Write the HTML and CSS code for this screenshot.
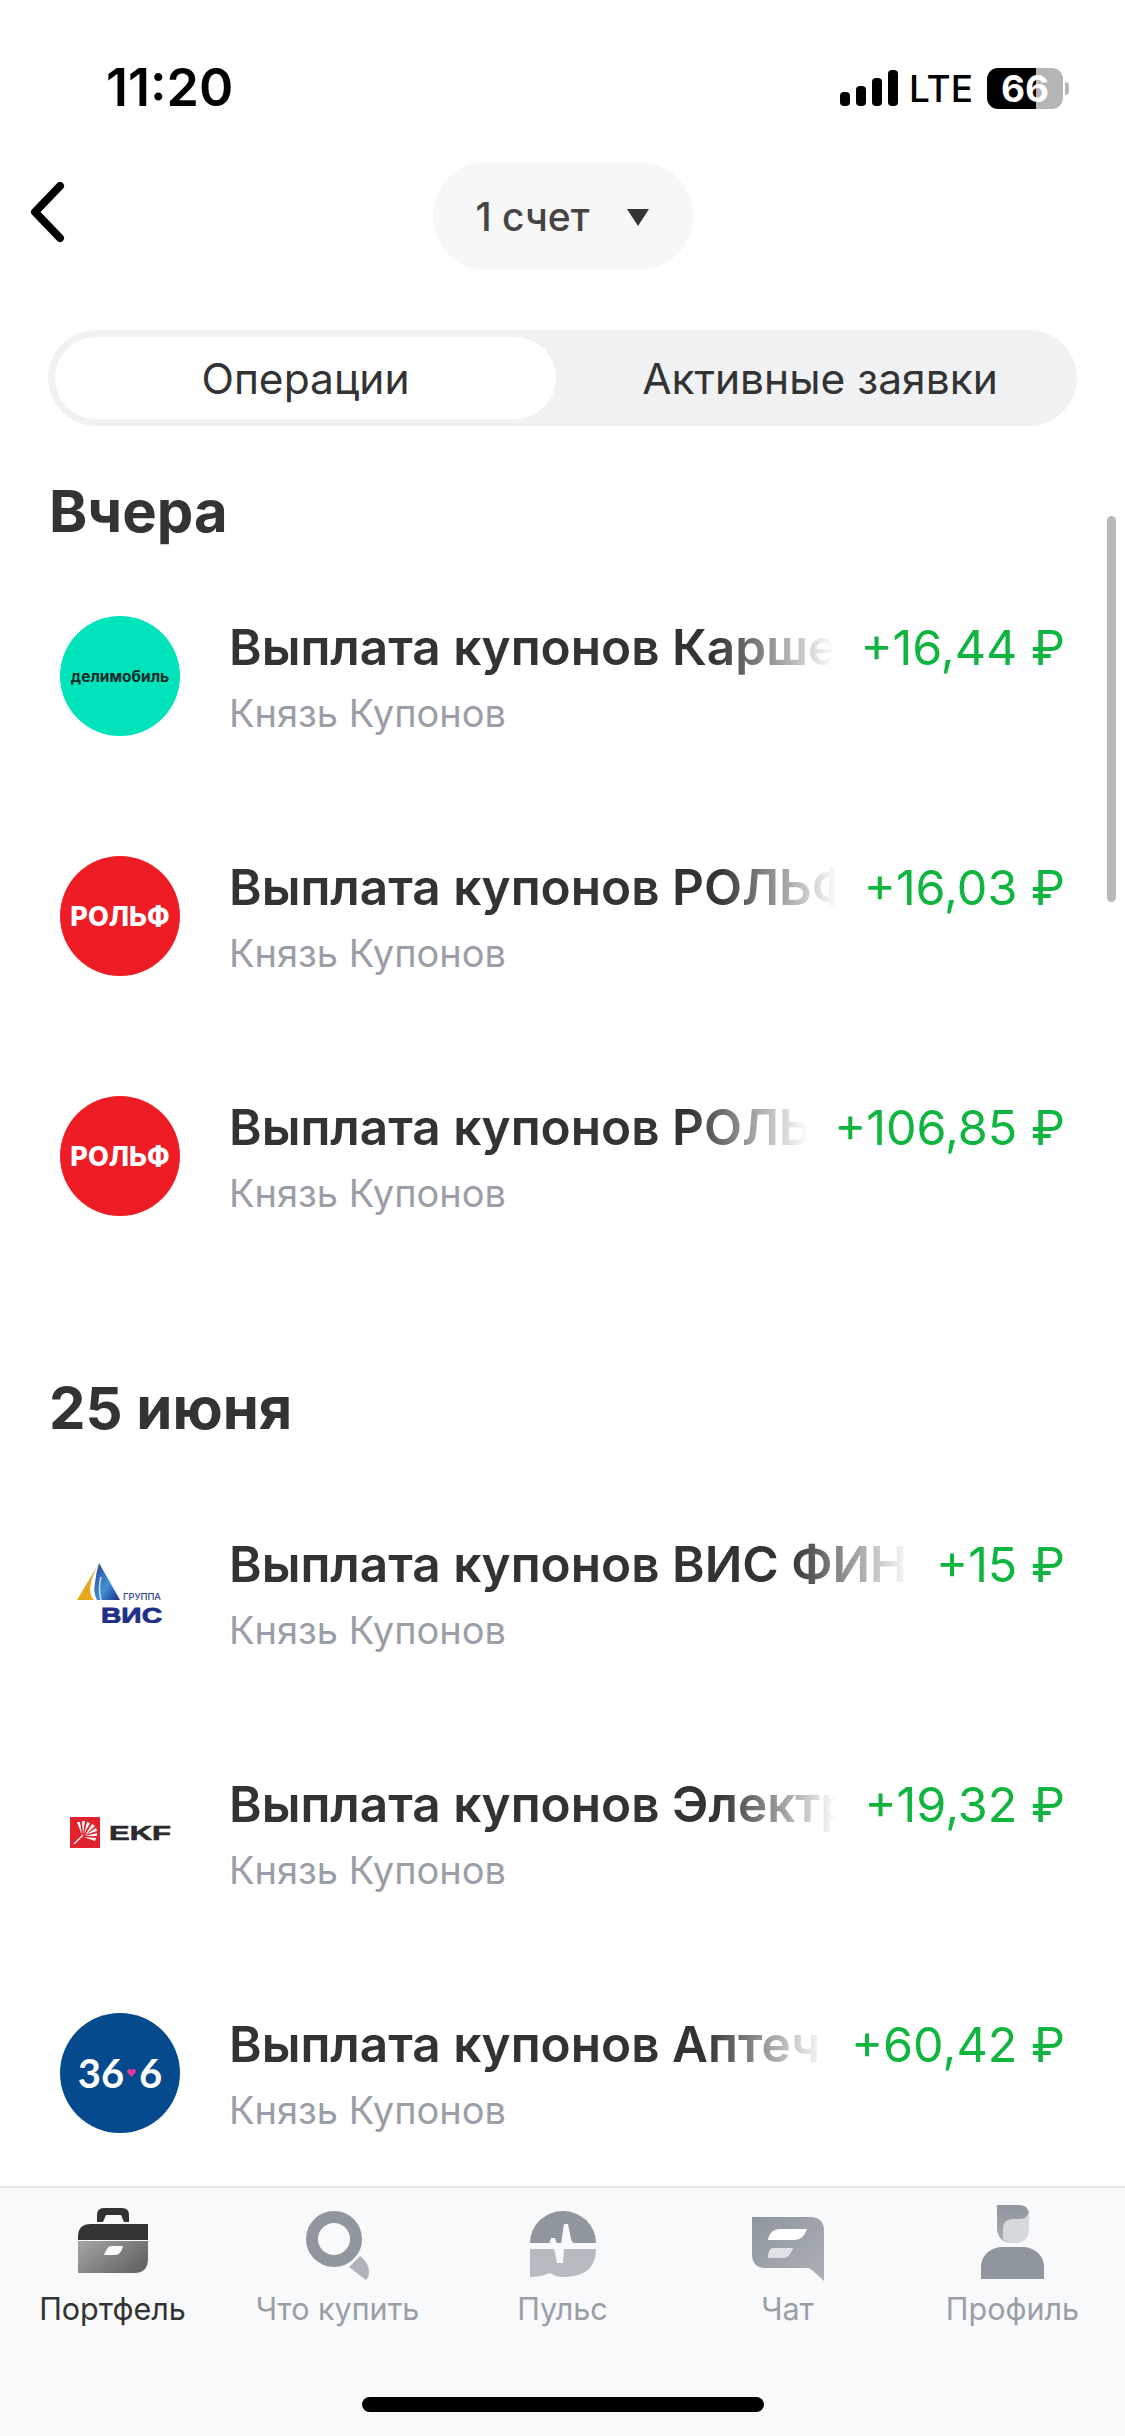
FILE: index.html
```html
<!DOCTYPE html>
<html lang="ru">
<head>
  <meta charset="UTF-8" />
  <meta name="viewport" content="width=device-width, initial-scale=1.0"/>
  <title>Операции</title>
  <link rel="stylesheet" href="styles.css">
</head>
<body>
  <div class="phone">

    <div class="status">
      <span class="clock">11:20</span>
      <div class="status-right">
        <div class="signal"><i></i><i></i><i></i><i></i></div>
        <span class="net">LTE</span>
        <div class="battery"><span class="battery-num">66</span></div>
        <div class="battery-tip"></div>
      </div>
    </div>

    <div class="topbar">
      <svg class="back" width="40" height="64" viewBox="0 0 40 64">
        <path d="M32 4 L7 30 L32 56" fill="none" stroke="#000" stroke-width="8" stroke-linecap="round" stroke-linejoin="round"/>
      </svg>
      <div class="account">
        <span>1 счет</span>
        <span class="caret"></span>
      </div>
    </div>

    <div class="tabs">
      <div class="tab active">Операции</div>
      <div class="tab tab-right">Активные заявки</div>
    </div>

    <div class="feed">
      <div class="scrollbar"></div>

      <h2 class="day">Вчера</h2>

      <div class="op">
        <div class="logo logo-deli">делимобиль</div>
        <div class="op-body">
          <div class="op-title">Выплата купонов Карше</div>
          <div class="op-sub">Князь Купонов</div>
        </div>
        <div class="op-sum">+16,44 ₽</div>
      </div>

      <div class="op">
        <div class="logo logo-rolf">РОЛЬФ</div>
        <div class="op-body">
          <div class="op-title">Выплата купонов РОЛЬФ</div>
          <div class="op-sub">Князь Купонов</div>
        </div>
        <div class="op-sum">+16,03 ₽</div>
      </div>

      <div class="op">
        <div class="logo logo-rolf">РОЛЬФ</div>
        <div class="op-body">
          <div class="op-title">Выплата купонов РОЛЬ</div>
          <div class="op-sub">Князь Купонов</div>
        </div>
        <div class="op-sum">+106,85 ₽</div>
      </div>

      <h2 class="day day-next">25 июня</h2>

      <div class="op">
        <div class="logo logo-vis">
          <svg width="86" height="60" viewBox="0 0 86 60">
            <defs>
              <linearGradient id="visBlue" x1="0" y1="0" x2="1" y2="1">
                <stop offset="0" stop-color="#2c3f96"/>
                <stop offset="0.55" stop-color="#3f8fd6"/>
                <stop offset="1" stop-color="#1d2f86"/>
              </linearGradient>
            </defs>
            <path d="M0 37 L22 0 Q14 14 13 26 Q13 33 17 37 Z" fill="#e8a71c"/>
            <path d="M22 0 L43 37 H20 Q16 30 18 20 Q19 10 22 0 Z" fill="url(#visBlue)"/>
            <path d="M24 14 Q21 25 24 37" stroke="#cfe3f5" stroke-width="1.5" fill="none"/>
            <text class="vis-small" x="46" y="37" textLength="38" lengthAdjust="spacingAndGlyphs">ГРУППА</text>
            <text class="vis-big" x="24" y="60" textLength="61" lengthAdjust="spacingAndGlyphs">ВИС</text>
          </svg>
        </div>
        <div class="op-body">
          <div class="op-title">Выплата купонов ВИС ФИН</div>
          <div class="op-sub">Князь Купонов</div>
        </div>
        <div class="op-sum">+15 ₽</div>
      </div>

      <div class="op">
        <div class="logo logo-ekf">
          <svg width="102" height="32" viewBox="0 0 102 32">
            <rect x="0" y="0" width="30" height="31" fill="#e0232d"/>
            <path d="M4 27 L13 18" stroke="#fff" stroke-width="1.2"/>
            <path d="M12 18 L7 5 L10 5 Z M13 17 L12 4 L15 4 Z M14 17 L17 5 L20 6 Z M15 18 L22 7 L25 9 Z M15 18 L26 11 L27 14 Z M15 19 L27 16 L27 19 Z M14 20 L26 21 L25 24 Z" fill="#fff"/>
            <text class="ekf-word" x="39" y="23" textLength="62" lengthAdjust="spacingAndGlyphs">EKF</text>
          </svg>
        </div>
        <div class="op-body">
          <div class="op-title">Выплата купонов Электр</div>
          <div class="op-sub">Князь Купонов</div>
        </div>
        <div class="op-sum">+19,32 ₽</div>
      </div>

      <div class="op">
        <div class="logo logo-apteka">
          <span>36</span><svg width="9" height="8" viewBox="0 0 10 9"><path d="M5 9 L0.4 3.8 A2.5 2.5 0 0 1 5 1.6 A2.5 2.5 0 0 1 9.6 3.8 Z" fill="#e6399b"/></svg><span>6</span>
        </div>
        <div class="op-body">
          <div class="op-title">Выплата купонов Аптеч</div>
          <div class="op-sub">Князь Купонов</div>
        </div>
        <div class="op-sum">+60,42 ₽</div>
      </div>
    </div>

    <div class="tabbar">
      <div class="nav-row">
        <div class="nav-item active">
          <div class="nav-icon">
            <svg class="lift-7" width="70" height="65" viewBox="0 0 70 65">
              <defs>
                <linearGradient id="caseBody" x1="0" y1="0" x2="1" y2="0.6">
                  <stop offset="0" stop-color="#a6a6a6"/>
                  <stop offset="1" stop-color="#666"/>
                </linearGradient>
              </defs>
              <path d="M19 14 V7 Q19 0 26 0 H44 Q51 0 51 7 V14 H46 L43 7 H28 L25 14 Z" fill="#333"/>
              <path d="M0 32 V29 Q0 16 13 16 H70 V32 Z" fill="#333"/>
              <path d="M0 33 H70 V51 Q70 65 56 65 H0 Z" fill="url(#caseBody)"/>
              <path d="M29 41 Q30 38 34 38 H45 Q43 47 37 47 H26 Q27 44 29 41 Z" fill="#f8f9fa"/>
            </svg>
          </div>
          <span>Портфель</span>
        </div>
        <div class="nav-item">
          <div class="nav-icon">
            <svg width="64" height="69" viewBox="0 0 64 69">
              <path d="M43 56 L54 45 Q63 52 63 61 Q63 66 60 69 Z" fill="#aeb3ba"/>
              <circle cx="28" cy="28" r="22" fill="none" stroke="#8f969e" stroke-width="12"/>
            </svg>
          </div>
          <span>Что купить</span>
        </div>
        <div class="nav-item">
          <div class="nav-icon">
            <svg class="lift-3" width="66" height="66" viewBox="0 0 66 66">
              <path d="M0 32 A33 32 0 0 1 66 32 Z" fill="#8f969e"/>
              <path d="M0 38 H66 Q66 66 33 66 Q26 66 20 62 Q10 66 0 66 Z" fill="#b6bac1"/>
              <path d="M31 33 L34 13 H38 L41 28 Q42 32 46 33 Z M19 33 L21 27 H25 L27 33 Z M24 37 H34 L33 52 H27 Z" fill="#f8f9fa"/>
            </svg>
          </div>
          <span>Пульс</span>
        </div>
        <div class="nav-item">
          <div class="nav-icon">
            <svg class="drop-1" width="72" height="64" viewBox="0 0 72 64">
              <defs>
                <linearGradient id="chatBubble" x1="0" y1="0" x2="1" y2="1">
                  <stop offset="0" stop-color="#8f969e"/>
                  <stop offset="1" stop-color="#abb0b6"/>
                </linearGradient>
              </defs>
              <path d="M0 0 H58 Q72 0 72 14 V64 L60 53 Q58 51 55 51 H14 Q0 51 0 37 Z" fill="url(#chatBubble)"/>
              <path d="M21 14 Q24 12 28 12 H55 Q51 23 43 23 H16 Q17 17 21 14 Z" fill="#fff"/>
              <path d="M20 31 H41 Q38 41 31 41 H16 Q16 33 20 31 Z" fill="#dfe2e6"/>
            </svg>
          </div>
          <span>Чат</span>
        </div>
        <div class="nav-item">
          <div class="nav-icon">
            <svg class="lift-1" width="63" height="74" viewBox="0 0 63 74">
              <defs>
                <linearGradient id="headTop" x1="0" y1="0" x2="0" y2="1">
                  <stop offset="0" stop-color="#8f969e"/>
                  <stop offset="1" stop-color="#a9aeb4"/>
                </linearGradient>
              </defs>
              <path d="M16 0 H38 Q48 0 48 10 V22 Q48 38 32 38 Q16 38 16 22 Z" fill="url(#headTop)"/>
              <path d="M22 34 V24 Q22 14 32 14 H40 Q46 14 48 6 V22 Q48 38 32 38 Q26 38 22 34 Z" fill="#d6d9dc"/>
              <path d="M0 74 V62 C0 50 10 42 22 42 H41 C53 42 63 50 63 62 V74 Z" fill="#8f969e"/>
            </svg>
          </div>
          <span>Профиль</span>
        </div>
      </div>
      <div class="home-bar"></div>
    </div>

  </div>
</body>
</html>
```

FILE: styles.css
```css
:root {
  --text: #333333;
  --muted: #9a9ea6;
  --green: #0fb53f;
  --tab-bg: #f0f1f3;
  --bar-bg: #f8f9fa;
}

* {
  box-sizing: border-box;
}

body {
  margin: 0;
  background: #fff;
  font-family: 'Inter', 'Roboto', sans-serif;
  color: var(--text);
}

.phone {
  width: 1125px;
  height: 2436px;
  display: flex;
  flex-direction: column;
  overflow: hidden;
}

/* status bar */
.status {
  height: 162px;
  flex: none;
  display: flex;
  justify-content: space-between;
  align-items: flex-start;
  padding: 58px 56px 0 106px;
}

.clock {
  font-size: 52px;
  font-weight: 600;
  line-height: 60px;
  color: #000;
}

.status-right {
  display: flex;
  align-items: center;
  height: 60px;
}

.signal {
  display: flex;
  align-items: flex-end;
  gap: 6px;
  height: 36px;
  margin-right: 11px;
}

.signal i {
  width: 10px;
  border-radius: 4px;
  background: #000;
}

.signal i:nth-child(1) { height: 14px; }
.signal i:nth-child(2) { height: 20px; }
.signal i:nth-child(3) { height: 28px; }
.signal i:nth-child(4) { height: 36px; }

.net {
  font-size: 37px;
  font-weight: 500;
  color: #000;
  margin-right: 14px;
}

.battery {
  width: 76px;
  height: 41px;
  border-radius: 11px;
  background: linear-gradient(to right, #000 64%, #b5b5b5 64%);
  display: flex;
  align-items: center;
  justify-content: center;
}

.battery-num {
  font-size: 37px;
  font-weight: 700;
  color: #fff;
}

.battery-tip {
  width: 4px;
  height: 13px;
  margin-left: 2px;
  border-radius: 0 4px 4px 0;
  background: #b5b5b5;
}

/* account switcher */
.topbar {
  height: 108px;
  flex: none;
  position: relative;
  display: flex;
  justify-content: center;
}

.back {
  position: absolute;
  left: 28px;
  top: 20px;
}

.account {
  width: 260px;
  height: 108px;
  border-radius: 54px;
  background: #f7f7f7;
  display: flex;
  align-items: center;
  justify-content: center;
  gap: 38px;
  font-size: 39px;
  font-weight: 500;
  color: #444;
}

.caret {
  width: 0;
  height: 0;
  margin-top: 3px;
  border-left: 11px solid transparent;
  border-right: 11px solid transparent;
  border-top: 17px solid #333;
}

/* segmented tabs */
.tabs {
  flex: none;
  height: 96px;
  margin: 60px 48px 0;
  padding: 7px;
  border-radius: 48px;
  background: var(--tab-bg);
  display: grid;
  grid-template-columns: 501px 1fr;
}

.tab {
  display: flex;
  align-items: center;
  justify-content: center;
  border-radius: 41px;
  font-size: 42.5px;
  color: var(--text);
}

.tab.active {
  background: #fff;
}

.tab-right {
  padding-left: 14px;
}

/* operations list */
.feed {
  flex: 1;
  min-height: 0;
  position: relative;
  overflow: hidden;
  padding: 0 60px;
}

.scrollbar {
  position: absolute;
  top: 90px;
  right: 9px;
  width: 9px;
  height: 386px;
  border-radius: 5px;
  background: #b9b9b9;
}

.day {
  margin: 51px 0 0 -11px;
  font-size: 58px;
  line-height: 68px;
  font-weight: 700;
  color: var(--text);
}

.day-next {
  margin-top: 158px;
}

.op {
  height: 120px;
  display: flex;
  align-items: flex-start;
  margin-top: 120px;
}

.day + .op {
  margin-top: 71px;
}

.day-next + .op {
  margin-top: 91px;
}

.logo {
  width: 120px;
  height: 120px;
  flex: none;
  border-radius: 50%;
  display: flex;
  align-items: center;
  justify-content: center;
  margin-right: 49px;
}

.logo-deli {
  background: #00e3bb;
  color: #0c2b2a;
  font-size: 15.5px;
  font-weight: 700;
}

.logo-rolf {
  background: #ee1c25;
  color: #fff;
  font-size: 27px;
  font-weight: 800;
}

.logo-ekf svg {
  margin-left: 2px;
}

.vis-small {
  font-size: 9px;
  font-weight: 500;
  fill: #2a3a8f;
}

.vis-big {
  font-family: 'Liberation Sans', sans-serif;
  font-size: 22px;
  font-weight: 700;
  fill: #1f2f88;
  stroke: #1f2f88;
  stroke-width: 0.8;
}

.ekf-word {
  font-family: 'Liberation Sans', sans-serif;
  font-size: 20px;
  font-weight: 700;
  fill: #2b2b2b;
  stroke: #2b2b2b;
  stroke-width: 0.6;
}

.logo-apteka {
  background: #054a8c;
  color: #fff;
  font-family: 'Lato', sans-serif;
  font-size: 40px;
  font-weight: 700;
  gap: 3px;
}

.op-body {
  flex: 1;
  min-width: 0;
  margin-right: 26px;
  padding-top: 3px;
}

.op-title {
  font-size: 49.5px;
  line-height: 56px;
  font-weight: 600;
  color: var(--text);
  white-space: nowrap;
  overflow: hidden;
  -webkit-mask-image: linear-gradient(to left, transparent 0, #000 120px);
  mask-image: linear-gradient(to left, transparent 0, #000 120px);
}

.op-sub {
  margin-top: 16px;
  font-size: 38px;
  line-height: 44px;
  color: var(--muted);
}

.op-sum {
  flex: none;
  margin-top: 4px;
  font-size: 48.5px;
  line-height: 56px;
  color: var(--green);
}

/* bottom navigation */
.tabbar {
  flex: none;
  height: 250px;
  background: var(--bar-bg);
  border-top: 2px solid #e4e5e7;
  position: relative;
}

.nav-row {
  display: grid;
  grid-template-columns: repeat(5, 1fr);
}

.nav-item {
  display: flex;
  flex-direction: column;
  align-items: center;
  font-size: 30.5px;
  color: var(--muted);
}

.nav-item.active {
  color: var(--text);
}

.nav-icon {
  height: 76px;
  margin-top: 16px;
  display: flex;
  align-items: flex-end;
  justify-content: center;
}

/* the icons don't share a baseline */
.lift-7 { margin-bottom: 7px; }
.lift-3 { margin-bottom: 3px; }
.lift-1 { margin-bottom: 1px; }
.drop-1 { margin-bottom: -1px; }

.nav-item span {
  margin-top: 9px;
  line-height: 40px;
}

.home-bar {
  position: absolute;
  left: 362px;
  top: 209px;
  width: 402px;
  height: 15px;
  border-radius: 8px;
  background: #000;
}
```
